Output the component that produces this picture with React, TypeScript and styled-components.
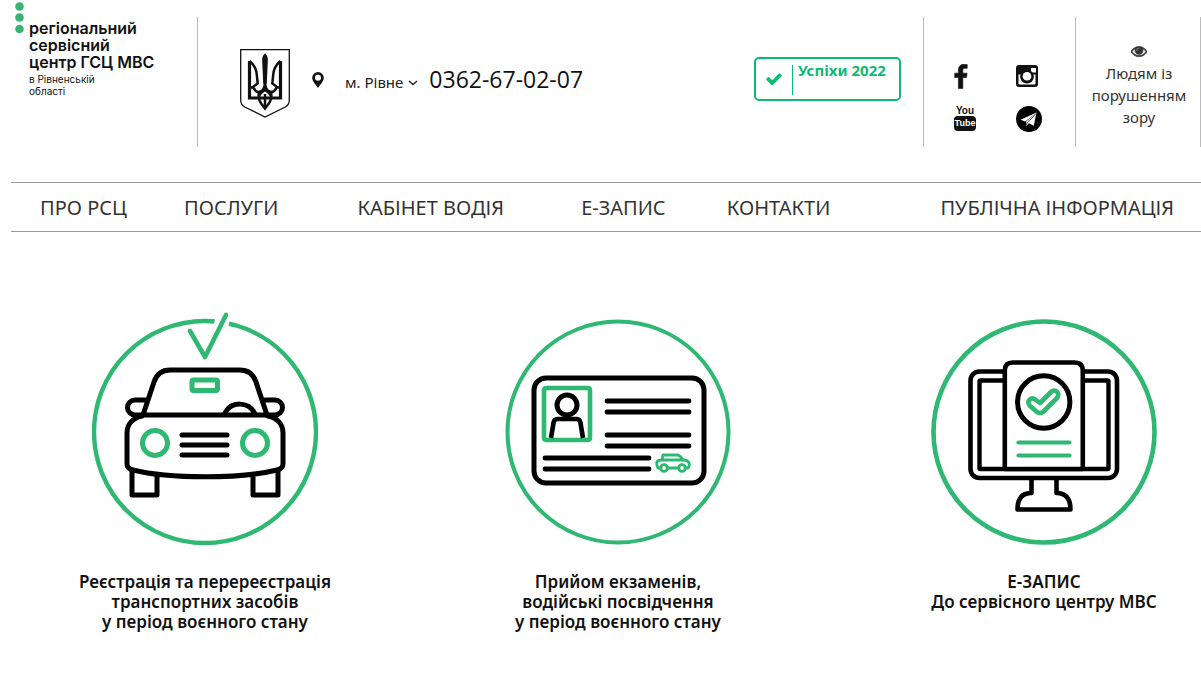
import React from "react";
import styled, { createGlobalStyle } from "styled-components";

const Global = createGlobalStyle`
  * { box-sizing: border-box; }
  body { margin: 0; background: #fff; color: #333; font-family: "Noto Sans", "Open Sans", sans-serif; }
  a { color: inherit; text-decoration: none; }
  svg { display: block; }
`;

const green = "#2eb872";

const Header = styled.header`
  display: flex;
  height: 147px;
`;
const Brand = styled.a`
  display: flex;
  gap: 5px;
  width: 197px;
  padding: 2px 0 0 15px;
  color: #111;
  font-family: Inter, sans-serif;
`;
const BrandText = styled.span`
  padding-top: 18px;
`;
const BrandName = styled.strong`
  display: block;
  font-size: 16px;
  line-height: 17px;
  font-weight: 600;
  white-space: nowrap;
`;
const BrandRegion = styled.span`
  display: block;
  font-size: 10px;
  line-height: 12px;
  margin-top: 2px;
`;
const Info = styled.div`
  flex: 1;
  display: flex;
  align-items: flex-start;
  margin-top: 17px;
  border-left: 1px solid #bbb;
  padding: 32px 22px 0 42px;
`;
const Contact = styled.div`
  display: flex;
  align-items: center;
  height: 62px;
  margin-left: 22px;
  color: #111;
`;
const CitySelect = styled.button`
  display: flex;
  align-items: center;
  gap: 5px;
  border: 0;
  background: none;
  padding: 4px 0 0;
  margin: 0 11px 0 21px;
  font: 15px/22px "Noto Sans", sans-serif;
  color: #222;
`;
const Phone = styled.a`
  padding-bottom: 2px;
  font: 23px/28px "Open Sans", sans-serif;
`;
const Success = styled.a`
  display: flex;
  align-items: flex-start;
  width: 147px;
  height: 44px;
  margin: 8px 0 0 auto;
  padding: 6px 8px 4px 9px;
  border: 2px solid #0bbb72;
  border-radius: 5px;
  color: #0bbb72;
  font: 700 15px/10px "Noto Sans", sans-serif;
  white-space: nowrap;
  svg { margin: 5px 9px 0 0; }
`;
const SuccessText = styled.span`
  height: 30px;
  padding-left: 5px;
  border-left: 1px solid #0bbb72;
`;
const Socials = styled.nav`
  width: 152px;
  margin-top: 17px;
  padding: 45px 32px 0 30px;
  border-left: 1px solid #bbb;
  display: grid;
  grid-template-columns: 26px 26px;
  grid-auto-rows: 28px;
  row-gap: 15px;
  column-gap: 36px;
  align-content: start;
  align-items: center;
  color: #111;
`;
const TubeLink = styled.a`
  display: flex;
  flex-direction: column;
  align-items: center;
  width: 22px;
  padding-bottom: 2px;
  font: 700 10px/11px "Liberation Sans", sans-serif;
`;
const TubeBox = styled.span`
  width: 22px;
  height: 15px;
  border-radius: 4px;
  background: #111;
  color: #fff;
  font-size: 9px;
  line-height: 15px;
  text-align: center;
`;
const Accessibility = styled.a`
  display: flex;
  flex-direction: column;
  align-items: center;
  gap: 3px;
  width: 126px;
  margin-top: 17px;
  padding: 26px 10px 0 12px;
  border: solid #bbb;
  border-width: 0 1px;
  font-size: 15px;
  line-height: 22px;
  text-align: center;
`;
const Menu = styled.nav`
  display: flex;
  justify-content: space-between;
  align-items: center;
  height: 50px;
  margin: 35px 0 0 11px;
  padding: 2px 27px 0 29px;
  border: solid #999;
  border-width: 1px 0;
`;
const MenuLink = styled.a<{ $gap: number }>`
  margin-right: ${(p) => p.$gap}px;
  font-size: 20px;
  line-height: 28px;
  white-space: nowrap;
`;
const Services = styled.main`
  display: flex;
  justify-content: space-between;
  padding: 80px 24px 45px 72px;
`;
const Service = styled.a<{ $gap?: number }>`
  display: flex;
  flex-direction: column;
  align-items: center;
  width: 266px;
  margin-right: ${(p) => p.$gap ?? 0}px;
  color: #111;
  font: 600 17px/20px "Noto Sans", sans-serif;
  text-align: center;
`;
const Caption = styled.span`
  margin-top: 20px;
  white-space: pre-line;
`;

const Glyph = ({ d, size }: { d: string; size: number }) => (
  <svg width={size} height={size} viewBox="0 0 1792 1792" fill="currentColor" aria-hidden="true"><path d={d} /></svg>
);
const check = "M1671 566q0 40-28 68l-724 724-136 136q-28 28-68 28t-68-28l-136-136-362-362q-28-28-28-68t28-68l136-136q28-28 68-28t68 28l294 295 656-657q28-28 68-28t68 28l136 136q28 28 28 68z";
const facebook = "M1343 12v264h-157q-86 0-116 36t-30 108v189h293l-39 296h-254v759h-306v-759h-255v-296h255v-218q0-186 104-288.5t277-102.5q147 0 228 12z";
const eye = "M1664 960q-152-236-381-353 61 104 61 225 0 185-131.5 316.5t-316.5 131.5-316.5-131.5-131.5-316.5q0-121 61-225-229 117-381 353 133 205 333.5 326.5t434.5 121.5 434.5-121.5 333.5-326.5zm-720-384q0-20-14-34t-34-14q-125 0-214.5 89.5t-89.5 214.5q0 20 14 34t34 14 34-14 14-34q0-86 61-147t147-61q20 0 34-14t14-34zm848 384q0 34-20 69-140 230-376.5 368.5t-499.5 138.5-499.5-139-376.5-368q-20-35-20-69t20-69q140-229 376.5-368t499.5-139 499.5 139 376.5 368q20 35 20 69z";

const Marker = () => (
  <svg width="12" height="16" viewBox="0 0 12 16" fill="currentColor" aria-hidden="true">
    <path fillRule="evenodd" d="M6 0a5.800 5.800 0 0 1 5.800 5.800C11.800 9.500 8 12.500 6 16 4 12.500.2 9.500.2 5.800A5.800 5.800 0 0 1 6 0zM6 2.800a3 3 0 1 0 0 6 3 3 0 0 0 0-6z" />
  </svg>
);

const Facebook = () => (
  <svg width="14" height="25" viewBox="479 -20 870 1720" fill="currentColor" stroke="currentColor" strokeWidth="40" aria-hidden="true"><path d={facebook} /></svg>
);

const Eye = () => (
  <svg width="16" height="16" viewBox="0 0 1792 1792" fill="currentColor" stroke="currentColor" strokeWidth="70" aria-hidden="true"><path d={eye} /></svg>
);

const Instagram = () => (
  <svg width="22" height="22" viewBox="0 0 22 22" aria-hidden="true">
    <rect width="22" height="22" rx="3" fill="#111" />
    <rect x="15" y="3" width="5" height="4.500" rx=".6" fill="#fff" />
    <path d="M2.500 9.500h2.200a6.700 6.700 0 1 0 12.600 0h2.200v9a1 1 0 0 1-1 1h-15a1 1 0 0 1-1-1z" fill="#fff" />
    <circle cx="11" cy="11.200" r="6.500" fill="#111" />
    <circle cx="11" cy="11.200" r="4.300" fill="#fff" />
  </svg>
);

const Telegram = () => (
  <svg width="26" height="26" viewBox="0 0 26 26" aria-hidden="true">
    <circle cx="13" cy="13" r="13" fill="#000" />
    <path d="M20.500 6.500L4.500 13.800l4.800 1.700z M20.500 6.500L10.200 15.600v4.600l2.600-2.900 5 2.500z" fill="#fff" />
    <path d="M20 7.500l-9 9.500-.5 2" fill="none" stroke="#000" strokeWidth=".7" />
  </svg>
);

const Emblem = () => (
  <svg width="50" height="69" viewBox="0 0 50 69" fill="none" stroke="#111" strokeWidth="2.500" aria-hidden="true">
    <path d="M.7.7h48.600v50.500c0 4-1.500 5.300-4 6.800L25 68 4.700 58C2.200 56.500.7 55.200.7 51.200z" strokeWidth="1.300" />
    <path d="M9.500 12v37h31V12" strokeWidth="3.200" />
    <path d="M9.500 12c5 4 7 9 7.300 14l.9 8.500-4.200 3c.5 4 3.500 6 6.500 5.300 3.500-1 5-5 5-11M40.500 12c-5 4-7 9-7.300 14l-.9 8.500 4.200 3c-.5 4-3.500 6-6.500 5.300-3.500-1-5-5-5-11" />
    <path d="M25 5.500c1.500 1.500 2.400 4 2 7L26 34h-2l-1-21.500c-.4-3 .5-5.500 2-7z" fill="#111" strokeWidth="1.600" />
    <path d="M25 41c-2.500 2-6 3-6 7.500 0 5 3.500 7.500 6 11 2.500-3.500 6-6 6-11 0-4.500-3.500-5.500-6-7.500zM25 45v15M10 38.500h4M36 38.500h4M20 42c-1.500 2-1.500 5-1 7M30 42c1.500 2 1.500 5 1 7" />
  </svg>
);

const Art = ({ children }: { children: React.ReactNode }) => (
  <svg width="226" height="240" viewBox="0 0 226 240" fill="none" stroke="#000" strokeWidth="5" strokeLinecap="round" strokeLinejoin="round" aria-hidden="true">{children}</svg>
);

const CarArt = () => (
  <Art>
    <circle cx="113" cy="120" r="111" stroke={green} strokeWidth="4.400" />
    <path d="M124 3h14l-2 18h-16z" fill="#fff" stroke="none" />
    <path d="M98 19l15 26L134 3" stroke={green} strokeWidth="4.600" />
    <path d="M51 103L62 70q4-12 16-12h70q12 0 16 12l11 33M53 88H43a7.500 7.500 0 0 0 0 15h140a7.500 7.500 0 0 0 0-15h-10" />
    <path d="M133 101c6-12 24-12 30 1" />
    <path d="M50 104c-9 2-15 8-15 17v31c0 3 2 5 6 6 36 9 108 9 144 0 4-1 6-3 6-6v-31c0-9-6-15-15-17M40 159v24h25v-20M186 159v24h-25v-20M90 123h45M90 133h45M90 143h45" />
    <rect x="100" y="68" width="25.500" height="10.500" rx="1.500" stroke={green} />
    <circle cx="63" cy="131" r="12.500" stroke={green} />
    <circle cx="163" cy="131" r="12.500" stroke={green} />
  </Art>
);
const LicenseArt = () => (
  <Art>
    <circle cx="113" cy="120" r="110.500" stroke={green} strokeWidth="4" />
    <rect x="29" y="66" width="170" height="105" rx="12" />
    <rect x="39" y="76" width="46" height="52" rx="2" stroke={green} strokeWidth="4.600" />
    <circle cx="62" cy="93" r="10" />
    <path d="M46 126l2.500-15q.5-4 4-4h19q3.500 0 4 4L78 126" strokeWidth="4.600" strokeLinecap="butt" />
    <path d="M102 89h82M102 100h82M102 123h82M102 134h82M40 146h104M40 157h104" strokeWidth="4.800" />
    <g stroke={green} strokeWidth="2.800">
      <path d="M156 156h-3q-2-4-1-6 1-2 5-2l1-5h14q3 0 6 5 5 0 6 3 1 3-1 5h-3M162 156h12M157 148h22" />
      <circle cx="159" cy="156" r="3.400" /><circle cx="177" cy="156" r="3.400" />
    </g>
  </Art>
);
const BookingArt = () => (
  <Art>
    <circle cx="113" cy="120" r="110.500" stroke={green} strokeWidth="4.600" />
    <rect x="39.500" y="59.500" width="146.500" height="106.500" rx="9" strokeWidth="4.600" />
    <rect x="48.500" y="68.500" width="129" height="88.500" rx="1" strokeWidth="4.400" />
    <path d="M73.800 157V58.500q0-8 8-8h62q8 0 8 8V157z" fill="#fff" strokeWidth="4.600" />
    <circle cx="112.700" cy="90" r="26.200" />
    <path d="M109 91l11-11c4-4 10 1 6 6l-14 14q-3 2-6 0l-7-6c-4-5 1-10 6-6z" stroke={green} strokeWidth="4.600" />
    <path d="M87.500 130.500h51M87.500 143.500h51" stroke={green} strokeWidth="4.200" />
    <path d="M100.500 168v13q-14 0-14 16.500h53q0-16.500-14-16.500v-13" strokeWidth="4.600" />
  </Art>
);

const menu: [string, number][] = [
  ["ПРО РСЦ", 0], ["ПОСЛУГИ", 22], ["КАБІНЕТ ВОДІЯ", 20], ["Е-ЗАПИС", 4], ["КОНТАКТИ", 53], ["ПУБЛІЧНА ІНФОРМАЦІЯ", 0],
];

export default function App() {
  return (
    <>
      <Global />
      <Header>
        <Brand href="#">
          <svg width="9" height="33" viewBox="0 0 9 33" fill="#3bb273" aria-hidden="true">
            <circle cx="4.500" cy="4.500" r="4.300" /><circle cx="4.500" cy="15.500" r="4.300" /><circle cx="4.500" cy="27" r="4.300" />
          </svg>
          <BrandText>
            <BrandName>регіональний<br />сервісний<br />центр ГСЦ МВС</BrandName>
            <BrandRegion>в Рівненській<br />області</BrandRegion>
          </BrandText>
        </Brand>
        <Info>
          <Emblem />
          <Contact>
            <Marker />
            <CitySelect type="button">
              м. Рівне
              <svg width="10" height="10" viewBox="0 0 10 10" fill="none" stroke="currentColor" strokeWidth="1.500" aria-hidden="true"><path d="M1 4l4 3.500L9 4" /></svg>
            </CitySelect>
            <Phone href="tel:0362670207">0362-67-02-07</Phone>
          </Contact>
          <Success href="#"><Glyph d={check} size={18} /><SuccessText>Успіхи 2022</SuccessText></Success>
        </Info>
        <Socials>
          <a href="#" aria-label="Facebook"><Facebook /></a>
          <a href="#" aria-label="Instagram"><Instagram /></a>
          <TubeLink href="#">You<TubeBox>Tube</TubeBox></TubeLink>
          <a href="#" aria-label="Telegram"><Telegram /></a>
        </Socials>
        <Accessibility href="#"><Eye />Людям із порушенням зору</Accessibility>
      </Header>
      <Menu>
        {menu.map(([label, gap]) => <MenuLink key={label} href="#" $gap={gap}>{label}</MenuLink>)}
      </Menu>
      <Services>
        <Service href="#"><CarArt /><Caption>{"Реєстрація та перереєстрація\nтранспортних засобів\nу період воєнного стану"}</Caption></Service>
        <Service href="#" $gap={13}><LicenseArt /><Caption>{"Прийом екзаменів,\nводійські посвідчення\nу період воєнного стану"}</Caption></Service>
        <Service href="#"><BookingArt /><Caption>{"Е-ЗАПИС\nДо сервісного центру МВС"}</Caption></Service>
      </Services>
    </>
  );
}
